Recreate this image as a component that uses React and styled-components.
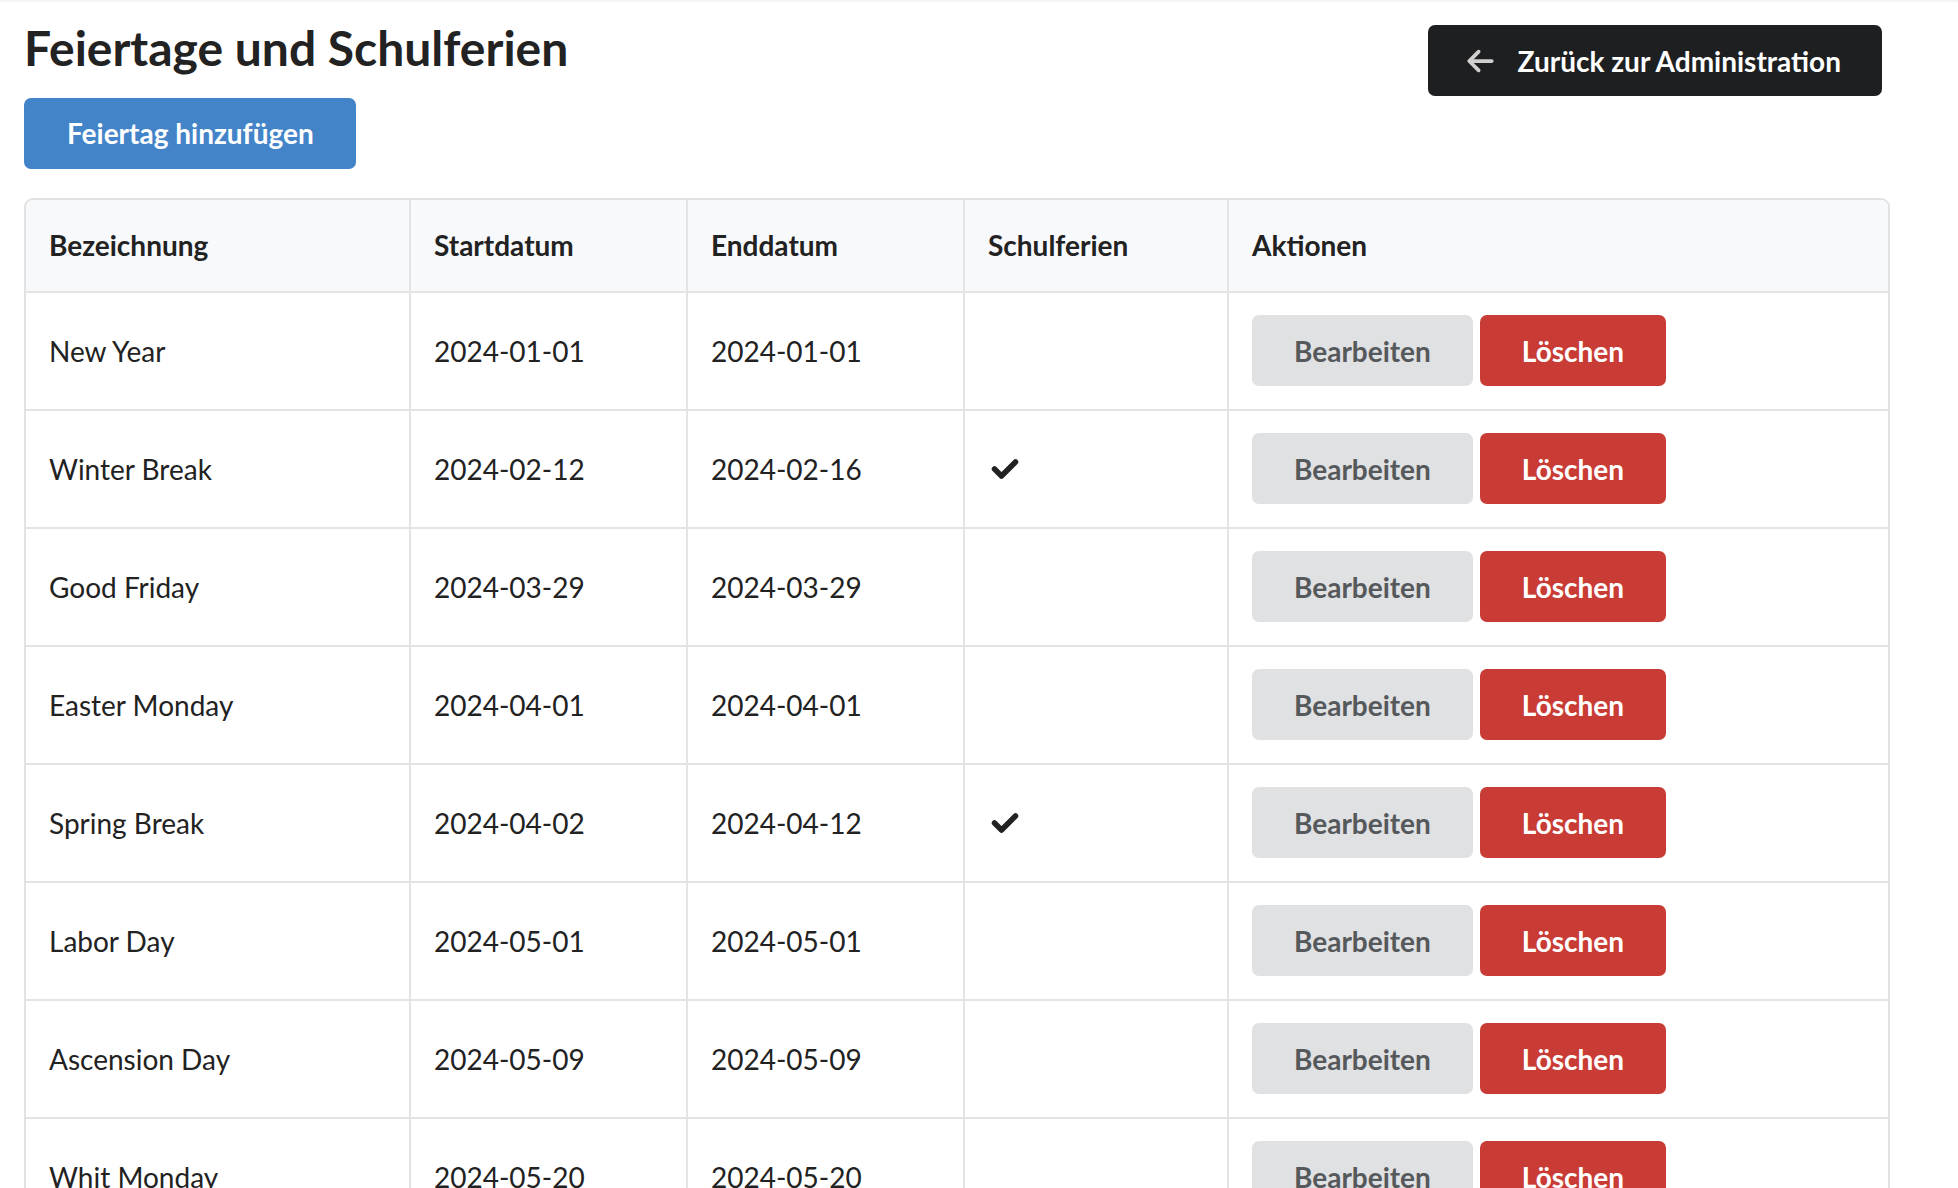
import React from "react";
import styled, { createGlobalStyle } from "styled-components";

const GlobalStyle = createGlobalStyle`
  html, body {
    margin: 0;
    padding: 0;
    background: #ffffff;
  }
  body {
    font-family: Lato, "Open Sans", "Liberation Sans", sans-serif;
    color: #222222;
  }
  * {
    box-sizing: border-box;
  }
`;

const Page = styled.div`
  min-height: 100vh;
  padding: 0 24px 40px 24px;
  box-shadow: inset 0 3px 3px -2px rgba(0, 0, 0, 0.08);
`;

const Container = styled.div`
  width: 1866px;
`;

const TopBar = styled.div`
  display: flex;
  justify-content: space-between;
  align-items: flex-start;
  padding-right: 8px;
`;

const TitleBlock = styled.div`
  display: flex;
  flex-direction: column;
  align-items: flex-start;
`;

const Title = styled.h1`
  margin: 19px 0 21px 0;
  font-size: 48px;
  font-weight: 700;
  line-height: 1.2;
  color: #222222;
`;

const Button = styled.button`
  display: inline-flex;
  align-items: center;
  justify-content: center;
  height: 71px;
  padding: 0 42px;
  border: none;
  border-radius: 7px;
  font-family: inherit;
  font-size: 28px;
  font-weight: 700;
  cursor: pointer;
  color: ${(p) => (p.$variant === "light" ? "#56595c" : "#ffffff")};
  background: ${(p) =>
    p.$variant === "primary"
      ? "#4384c9"
      : p.$variant === "danger"
      ? "#c93c35"
      : p.$variant === "dark"
      ? "#1e1f21"
      : "#e0e1e3"};
`;

const AddButton = styled(Button)`
  padding: 0 42px 0 43px;
`;

const BackButton = styled(Button)`
  margin-top: 25px;
  padding: 0 41px 0 39px;
  gap: 24px;
  svg {
    width: 27px;
    height: 30px;
    fill: #cfcfcf;
  }
`;

const TableCard = styled.div`
  margin-top: 29px;
  border: 2px solid #e2e2e2;
  border-radius: 9px;
  overflow: hidden;
`;

const Row = styled.div`
  display: grid;
  grid-template-columns: 385px 277px 277px 264px 1fr;
  height: ${(p) => (p.$head ? "93px" : "118px")};
  background: ${(p) => (p.$head ? "#f8f9fa" : "#ffffff")};
  border-bottom: 2px solid #e4e4e4;
  font-weight: ${(p) => (p.$head ? 700 : 400)};
`;

const Cell = styled.div`
  display: flex;
  align-items: center;
  gap: 7px;
  padding: 0 23px;
  font-size: 28px;
  color: #222222;
  border-right: 2px solid #e4e4e4;
  &:last-child {
    border-right: none;
  }
`;

const Check = styled.svg`
  width: 28px;
  height: 22px;
  margin-left: 3px;
  fill: none;
  stroke: #222222;
  stroke-width: 5.5;
  stroke-linecap: round;
  stroke-linejoin: round;
`;

const CheckIcon = () => (
  <Check viewBox="0 0 28 22">
    <polyline points="3.5,11 10.5,18 24.5,4" />
  </Check>
);

const holidays = [
  { name: "New Year", start: "2024-01-01", end: "2024-01-01", school: false },
  { name: "Winter Break", start: "2024-02-12", end: "2024-02-16", school: true },
  { name: "Good Friday", start: "2024-03-29", end: "2024-03-29", school: false },
  { name: "Easter Monday", start: "2024-04-01", end: "2024-04-01", school: false },
  { name: "Spring Break", start: "2024-04-02", end: "2024-04-12", school: true },
  { name: "Labor Day", start: "2024-05-01", end: "2024-05-01", school: false },
  { name: "Ascension Day", start: "2024-05-09", end: "2024-05-09", school: false },
  { name: "Whit Monday", start: "2024-05-20", end: "2024-05-20", school: false },
  { name: "Summer Break", start: "2024-07-22", end: "2024-08-30", school: true },
];

export default function App() {
  return (
    <>
      <GlobalStyle />
      <Page>
        <Container>
          <TopBar>
            <TitleBlock>
              <Title>Feiertage und Schulferien</Title>
              <AddButton $variant="primary">Feiertag hinzufügen</AddButton>
            </TitleBlock>
            <BackButton $variant="dark">
              <svg viewBox="0 0 448 512">
                <path d="M9.4 233.4c-12.5 12.5-12.5 32.8 0 45.3l160 160c12.5 12.5 32.8 12.5 45.3 0s12.5-32.8 0-45.3L109.2 288 416 288c17.7 0 32-14.3 32-32s-14.3-32-32-32l-306.7 0L214.6 118.6c12.5-12.5 12.5-32.8 0-45.3s-32.8-12.5-45.3 0l-160 160z" />
              </svg>
              Zurück zur Administration
            </BackButton>
          </TopBar>

          <TableCard>
            <Row $head>
              <Cell>Bezeichnung</Cell>
              <Cell>Startdatum</Cell>
              <Cell>Enddatum</Cell>
              <Cell>Schulferien</Cell>
              <Cell>Aktionen</Cell>
            </Row>
            {holidays.map((h) => (
              <Row key={h.name}>
                <Cell>{h.name}</Cell>
                <Cell>{h.start}</Cell>
                <Cell>{h.end}</Cell>
                <Cell>{h.school && <CheckIcon />}</Cell>
                <Cell>
                  <Button $variant="light">Bearbeiten</Button>
                  <Button $variant="danger">Löschen</Button>
                </Cell>
              </Row>
            ))}
          </TableCard>
        </Container>
      </Page>
    </>
  );
}
